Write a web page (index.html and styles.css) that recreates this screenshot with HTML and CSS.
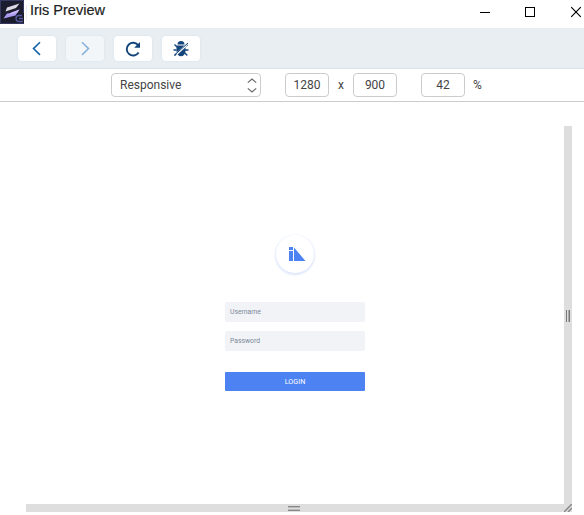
FILE: index.html
```html
<!DOCTYPE html>
<html lang="en">
<head>
<meta charset="utf-8">
<title>Iris Preview</title>
<link rel="stylesheet" href="styles.css">
</head>
<body>
<header class="titlebar">
  <svg class="app-icon" width="29" height="25" viewBox="0 0 29 25">
    <rect width="24" height="24" fill="#1b1c2d"/>
    <path d="M.5 0v23.500H24M0 .5h23.500V13" fill="none" stroke="#363961"/>
    <path d="M7 7.500L19.500 3.500L16 8L5.500 11.500Z" fill="#dedbe6"/>
    <path d="M11.500 13L19.500 9.500L15.500 15.500L3.500 18.500L7 13.500Z" fill="#a99aef"/>
    <path d="M11 12.500L19.500 9.500L17.500 12.500L9 15Z" fill="#cbb7f5"/>
    <path d="M22 15.500h-3a3 3 0 0 0 0 6h4M19 18.500h4" fill="none" stroke="#535aa0" stroke-width="1.300"/>
    <path d="M26.500 5v15" fill="none" stroke="#e9edf4"/>
  </svg>
  <h1 class="title">Iris Preview</h1>
  <svg class="window-controls" width="104" height="28" viewBox="0 0 104 28" fill="none" stroke="#000">
    <path d="M0 12.500h10M45.500 7.500h9v9h-9z" shape-rendering="crispEdges"/>
    <path d="M91.200 7.200l9.600 9.600m0-9.600l-9.600 9.600" stroke-width="1.150"/>
  </svg>
</header>
<nav class="toolbar">
  <button class="tool" aria-label="Back"><svg width="20" height="20" viewBox="0 0 20 20"><path d="M13 3.300L6.500 9.600l6.500 6.300" fill="none" stroke="#1766ab" stroke-width="1.600"/></svg></button>
  <button class="tool disabled" aria-label="Forward"><svg width="20" height="20" viewBox="0 0 20 20"><path d="M7 3.300l6.500 6.300-6.500 6.300" fill="none" stroke="#8ab4dc" stroke-width="1.600"/></svg></button>
  <button class="tool" aria-label="Reload"><svg width="20" height="20" viewBox="0 0 20 20"><path d="M15.400 6.500A6.400 6.400 0 1 0 15.600 13.500" fill="none" stroke="#14457a" stroke-width="1.900"/><path d="M17 3V8.800H11.200Z" fill="#14457a"/></svg></button>
  <button class="tool" aria-label="Debug"><svg width="20" height="20" viewBox="0 0 20 20"><g stroke="#14457a" fill="none" stroke-width="1.300"><path d="M6 8L3.500 5.500M14 8l2.500-2.200M5.500 11H2.500M14 11h3.500M6 14l-2.300 2.500M14 14l2.300 2.500"/></g><path d="M6.500 5.500a3.500 3.500 0 0 1 7 0z" fill="#14457a"/><path d="M5.500 6.500h9v5.500a4.500 5.200 0 0 1-9 0z" fill="#14457a"/><path d="M5.500 15L15.500 6" stroke="#fff" stroke-width="2.200"/><path d="M3 16.500L17 4" stroke="#14457a" stroke-width="1"/></svg></button>
</nav>
<section class="device-bar">
  <div class="field device"><span>Responsive</span>
    <svg width="10" height="16" viewBox="0 0 10 16" fill="none" stroke="#666" stroke-width="1.100"><path d="M.8 5.700l4.200-3.700 4.200 3.700M.8 11.300l4.200 3.700 4.200-3.700"/></svg>
  </div>
  <div class="field number width">1280</div>
  <span class="times">x</span>
  <div class="field number">900</div>
  <div class="field number scale">42</div>
  <span class="percent">%</span>
</section>
<main class="frame">
  <div class="page">
    <div class="logo">
      <svg width="17" height="14" viewBox="0 0 17 14" fill="#4d82f3"><path d="M0 0h4v3H0zM0 4h4v10H0zM5 0.500L16.500 14H5z"/></svg>
    </div>
    <div class="input">Username</div>
    <div class="input">Password</div>
    <button class="login">LOGIN</button>
  </div>
  <div class="resize-x"><i></i></div>
  <div class="resize-y"><i></i></div>
  <svg class="corner" width="8" height="8" viewBox="0 0 8 8" stroke="#888"><path d="M0 8L8 0M4 8L8 4" stroke-width="1.500"/></svg>
</main>
</body>
</html>
```

FILE: styles.css
```css
* { box-sizing: border-box; }
body {
  margin: 0;
  height: 515px;
  overflow: hidden;
  background: #fff;
  color: #444;
  font-family: Roboto, "Liberation Sans", sans-serif;
}
button { border: 0; padding: 0; font-family: inherit; }
svg { display: block; flex: none; }
.titlebar { display: flex; height: 28px; }
.title {
  margin: 0 auto 0 0;
  padding-left: 1px;
  color: #222;
  font: 14.500px/21px "Liberation Sans", Arial, sans-serif;
  -webkit-text-stroke: 0.200px #222;
}
.toolbar {
  display: flex;
  gap: 10px;
  height: 41px;
  padding: 8px 18px;
  background: #e9eef3;
  border-bottom: 1px solid #d5e2ec;
}
.tool {
  display: flex;
  align-items: center;
  justify-content: center;
  width: 38px;
  height: 25px;
  border-radius: 4px;
  background: #fff;
  box-shadow: 0 0 1px 1px #e0e9ef;
}
.tool.disabled { background: #f2f6f9; }
.device-bar {
  display: flex;
  height: 33px;
  padding: 4px 0 0 111px;
  border-bottom: 1px solid #ccc;
  font-size: 12px;
  line-height: 22px;
}
.field {
  display: flex;
  height: 24px;
  border: 1px solid #ccc;
  border-radius: 4px;
}
.device {
  width: 150px;
  justify-content: space-between;
  align-items: center;
  padding: 0 3px 0 8px;
}
.number { width: 44px; justify-content: center; }
.width { margin-left: 24px; }
.times { width: 24px; text-align: center; line-height: 24px; }
.scale { margin-left: 24px; }
.percent { margin-left: 8px; line-height: 24px; }
.frame {
  position: relative;
  display: grid;
  grid-template: 378px 8px / 538px 8px;
  width: 546px;
  margin: 24px 0 0 26px;
}
.page {
  display: flex;
  flex-direction: column;
  align-items: center;
  padding-top: 109px;
}
.logo {
  display: flex;
  align-items: center;
  justify-content: center;
  width: 38px;
  height: 38px;
  margin-bottom: 29px;
  padding-left: 5px;
  border-radius: 50%;
  box-shadow: 0 1px 2px 1px #dfe8fb;
}
.input {
  width: 140px;
  height: 20px;
  margin-bottom: 9px;
  padding-left: 5px;
  border-radius: 2px;
  background: #f1f3f7;
  color: #7c8998;
  font-size: 6.800px;
  line-height: 20px;
}
.login {
  width: 140px;
  height: 19px;
  margin-top: 12px;
  border-radius: 1px;
  background: #4d82f3;
  color: #fff;
  font-size: 7.200px;
  line-height: 19px;
}
.resize-x, .resize-y {
  display: flex;
  align-items: center;
  justify-content: center;
  background: #dedede;
}
.resize-y { grid-column: 1 / 3; }
.resize-x i { width: 4px; height: 12px; margin-top: 2px; border: solid #777; border-width: 0 1px; background: linear-gradient(90deg, #dedede 50%, #aaa 50%); }
.resize-y i { width: 12px; height: 5px; margin: 1px 10px 0 0; border: solid #888; border-width: 1px 0; background: linear-gradient(#bbb 33%, #dedede 33% 66%, #bbb 66%); }
.corner { position: absolute; right: 0; bottom: 0; }
```
